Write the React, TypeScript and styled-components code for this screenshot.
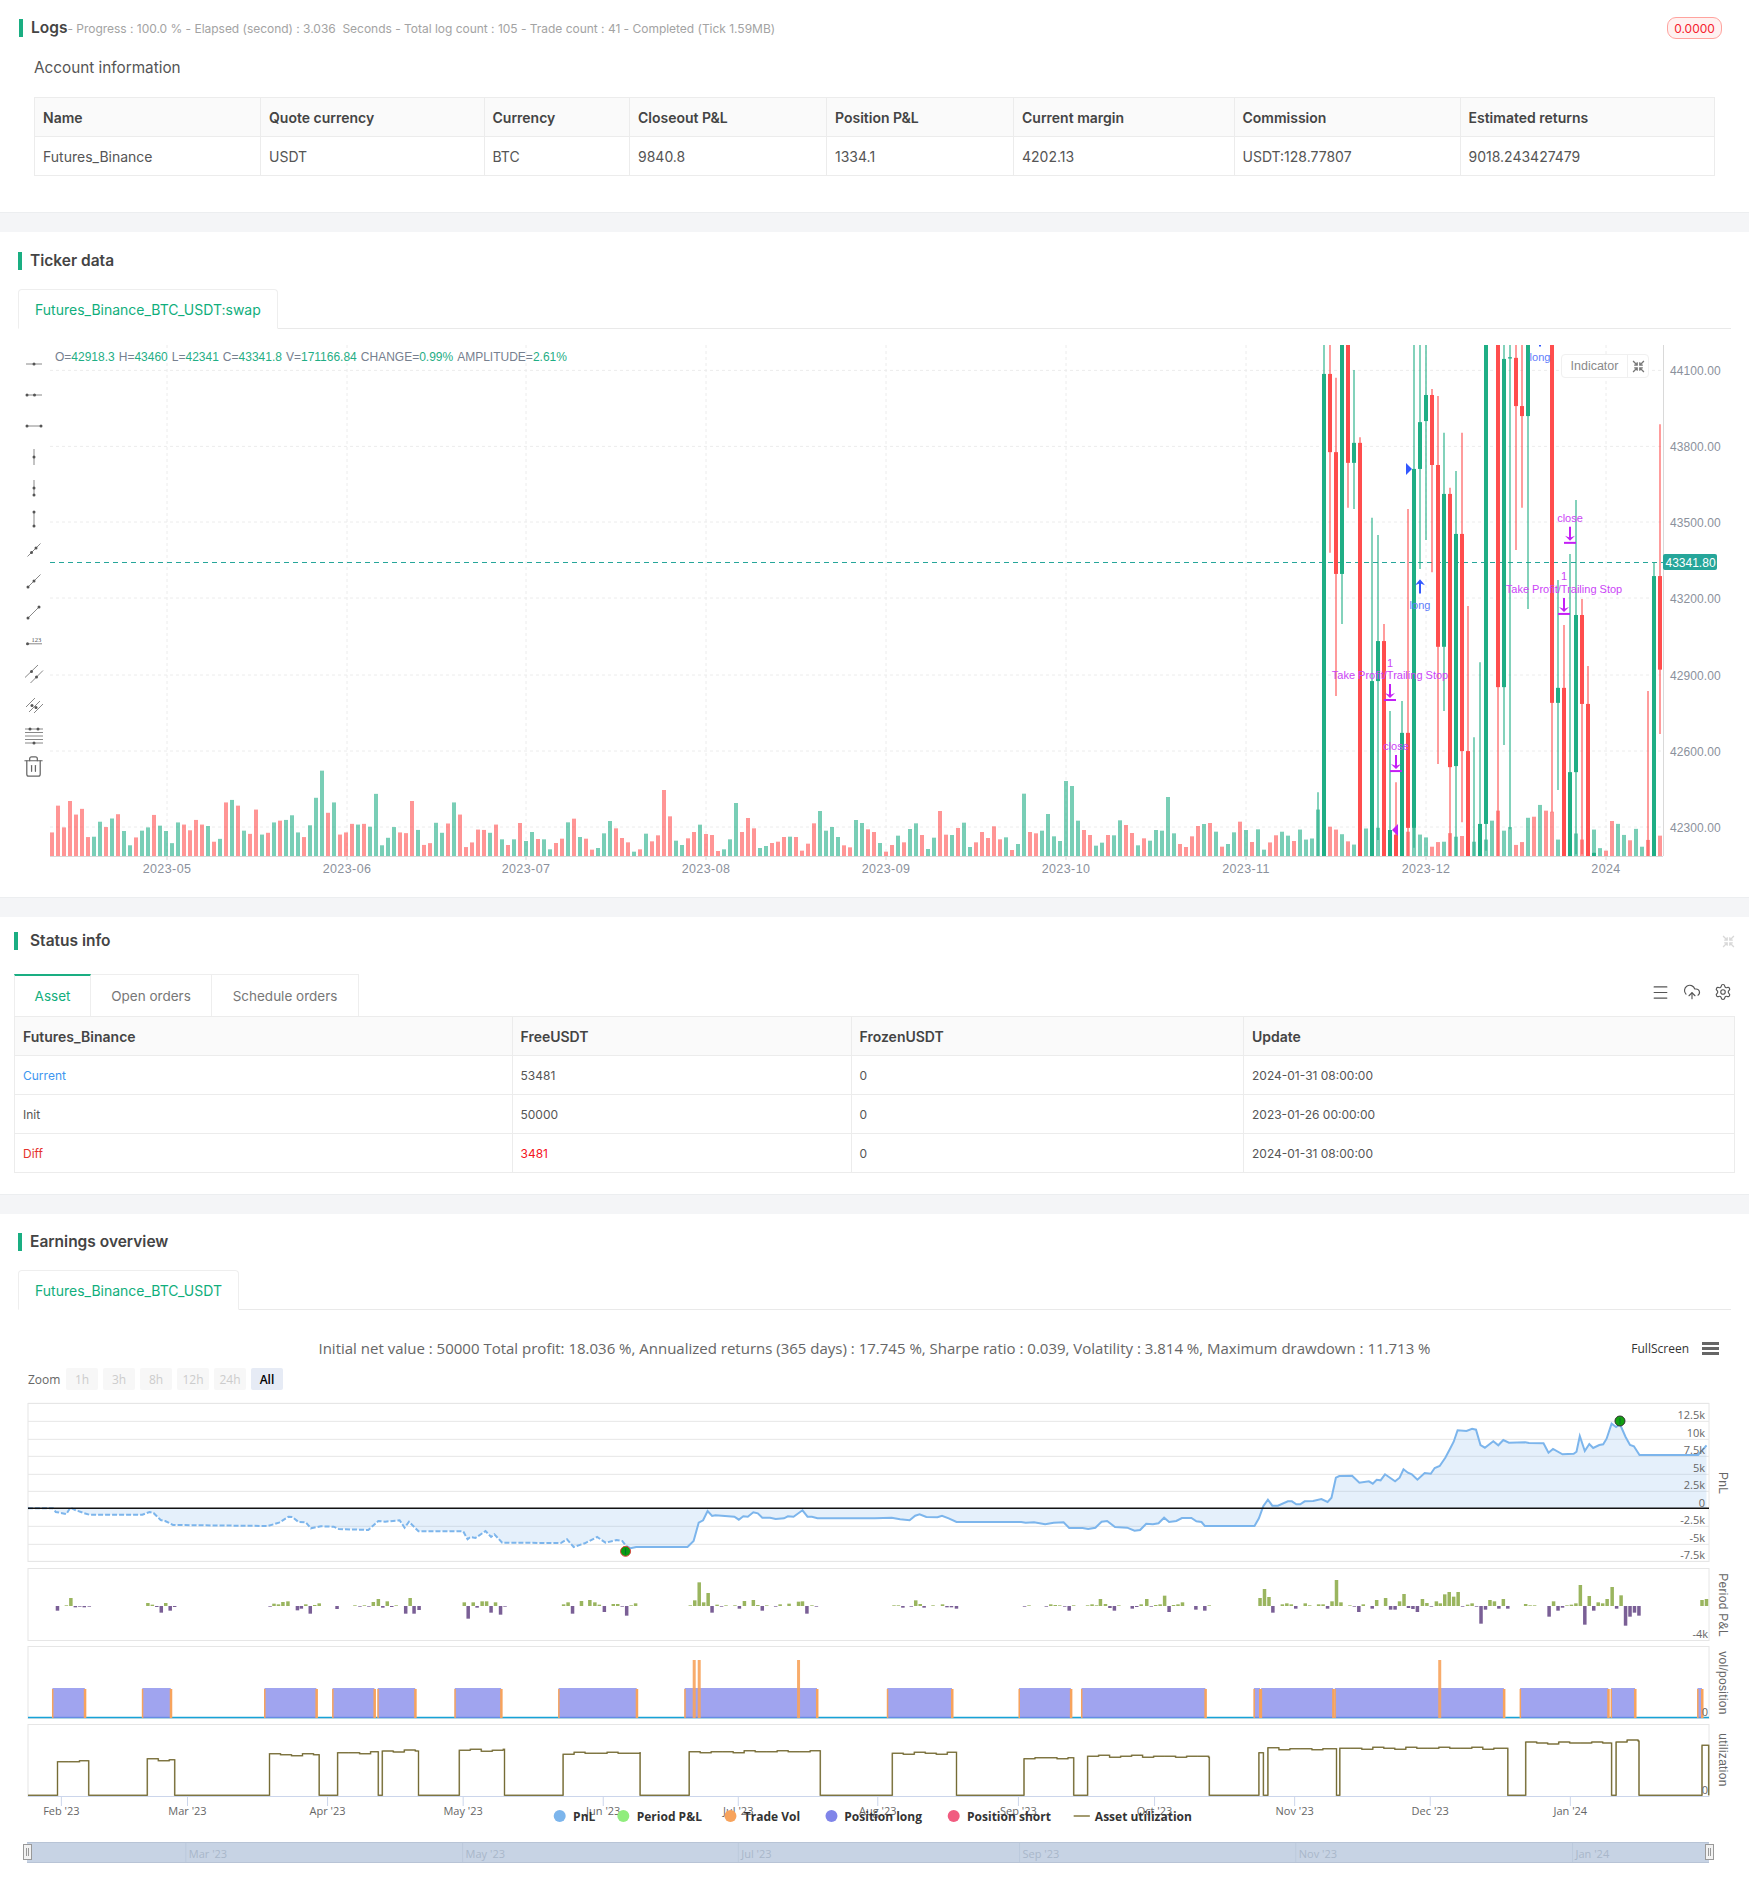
import React from "react";
import styled, { createGlobalStyle } from "styled-components";
import { CloudUpload, Menu, Settings, Trash2 } from "lucide-react";

const GlobalStyle = createGlobalStyle`
  body {
    margin: 0;
    background: #fff;
    font-family: Inter, "Liberation Sans", sans-serif;
    color: #555;
  }
`;

const GREEN = "#1fae85";
const RED = "#ff4d4d";
const MARK = "#c31ff5";
const MARK_TEXT = "#cb45f7";
const BLUE = "#3358ff";

const Band = styled.div`
  height: 20px;
  background: #f4f5f7;
  border-top: 1px solid #eceef0;
  box-sizing: border-box;
`;

const Section = styled.section<{ $top?: number; $bottom?: number }>`
  padding: ${(p) => p.$top ?? 20}px 0 ${(p) => p.$bottom ?? 0}px;
`;

const Heading = styled.h2<{ $left?: number; $gap?: number }>`
  display: flex;
  align-items: center;
  height: 18px;
  margin: 0 0 0 ${(p) => p.$left ?? 18}px;
  font-size: 15.5px;
  line-height: 18px;
  font-weight: 600;
  color: #444;

  &::before {
    content: "";
    width: 4px;
    height: 18px;
    margin-right: ${(p) => p.$gap ?? 8}px;
    background: #1aae82;
  }
`;

const LogsRow = styled.div`
  display: flex;
  align-items: center;
  justify-content: space-between;
  padding-right: 27px;
`;

const LogsLeft = styled.div`
  display: flex;
  align-items: center;
`;

const Progress = styled.span`
  font-size: 12px;
  color: #a3a3a3;
  white-space: pre;
  letter-spacing: -0.02px;
`;

const Badge = styled.span`
  height: 22px;
  width: 55px;
  box-sizing: border-box;
  display: flex;
  align-items: center;
  justify-content: center;
  font-size: 12px;
  color: #f5222d;
  background: #fff1f0;
  border: 1px solid #ffa39e;
  border-radius: 9px;
`;

const SubTitle = styled.div`
  margin: 19px 0 19px 34px;
  height: 20px;
  line-height: 20px;
  font-size: 15.3px;
  color: #555;
`;

const Table = styled.table<{ $left: number; $width: number; $small?: boolean }>`
  margin-left: ${(p) => p.$left}px;
  width: ${(p) => p.$width}px;
  table-layout: fixed;
  border-collapse: collapse;
  font-size: 14px;

  th,
  td {
    height: 39px;
    padding: 0 8px;
    box-sizing: border-box;
    border: 1px solid #ececec;
    text-align: left;
    white-space: nowrap;
  }

  th {
    background: #fafafa;
    font-weight: 600;
    color: #444;
  }

  td {
    color: #555;
    font-size: ${(p) => (p.$small ? 12 : 14)}px;
  }
`;

const Cell = styled.td<{ $color?: string }>`
  && {
    color: ${(p) => p.$color ?? "#555"};
  }
`;

const TabBar = styled.div`
  display: flex;
  margin: 19px 18px 0 18px;
  height: 39px;
  border-bottom: 1px solid #e9e9e9;
`;

const SoloTab = styled.div`
  height: 40px;
  padding: 0 16px;
  box-sizing: border-box;
  display: flex;
  align-items: center;
  font-size: 14px;
  color: #10ae7c;
  background: #fff;
  border: 1px solid #eee;
  border-bottom: 1px solid #fff;
  border-radius: 4px 4px 0 0;
`;

const ChartWrap = styled.div`
  position: relative;
  display: flex;
  margin-top: 16px;
`;

const Toolbar = styled.div`
  width: 50px;
  flex: none;
  box-sizing: border-box;
  padding: 3px 0 0 22px;
  display: flex;
  flex-direction: column;
`;

const ToolSlot = styled.div`
  height: 31px;
  display: flex;
  align-items: center;
  color: #666;
`;

const KlineSvg = styled.svg`
  display: block;
  flex: none;
`;

const Ohlc = styled.div`
  position: absolute;
  left: 55px;
  top: 5px;
  display: flex;
  gap: 4px;
  font: 12px/14px "Liberation Sans", sans-serif;
  color: #76808f;
  white-space: pre;
`;

const OhlcValue = styled.span`
  color: ${GREEN};
`;

const IndicatorBox = styled.div`
  position: absolute;
  left: 1561px;
  top: 9px;
  display: flex;
  height: 24px;
  width: 88px;
  box-sizing: border-box;
  border: 1px solid #f0f0f0;
  border-radius: 4px;
  background: #fff;
  font: 12.5px "Liberation Sans", sans-serif;
  color: #8a8a8a;
`;

const IndicatorLabel = styled.div`
  width: 65px;
  display: flex;
  align-items: center;
  justify-content: center;
  border-right: 1px solid #f0f0f0;
`;

const IndicatorIcon = styled.div`
  flex: 1;
  display: flex;
  align-items: center;
  justify-content: center;
`;

const StatusHead = styled.div`
  display: flex;
  justify-content: space-between;
  align-items: center;
  padding-right: 14px;
`;

const StatusBar = styled.div`
  display: flex;
  justify-content: space-between;
  align-items: center;
  margin: 24px 17px 0 14px;
  height: 42px;
`;

const CardTabs = styled.div`
  display: flex;
  height: 42px;
`;

const CardTab = styled.div<{ $active?: boolean; $width: number }>`
  width: ${(p) => p.$width}px;
  box-sizing: border-box;
  display: flex;
  align-items: center;
  justify-content: center;
  font-size: 13.5px;
  color: ${(p) => (p.$active ? "#10ae7c" : "#777")};
  border: 1px solid #eee;
  border-left: ${(p) => (p.$active ? "1px solid #eee" : "none")};
  border-bottom: none;
  border-top: ${(p) => (p.$active ? "2px solid #1aae82" : "1px solid #eee")};
`;

const ToolIcons = styled.div`
  display: flex;
  align-items: center;
  gap: 13px;
  color: #555;
  margin-top: -6px;
`;

const ChartHead = styled.div`
  display: grid;
  grid-template-columns: 1fr auto 1fr;
  align-items: center;
  margin-top: 28px;
  height: 20px;
`;

const Summary = styled.div`
  font: 15px/20px "Open Sans", sans-serif;
  color: #666;
  white-space: nowrap;
  grid-column: 2;
`;

const FullScreen = styled.div`
  justify-self: end;
  display: flex;
  align-items: center;
  gap: 13px;
  padding-right: 30px;
  font: 12px "Open Sans", sans-serif;
  color: #333;
`;

const Burger = styled.div`
  width: 17px;
  height: 13px;
  border-top: 3px solid #666;
  border-bottom: 3px solid #666;
  box-sizing: border-box;
  position: relative;

  &::after {
    content: "";
    position: absolute;
    left: 0;
    right: 0;
    top: 2px;
    height: 3px;
    background: #666;
  }
`;

const ZoomRow = styled.div`
  display: flex;
  align-items: center;
  gap: 5px;
  margin: 10px 0 0 28px;
  height: 22px;
  font: 12px "Open Sans", sans-serif;
  color: #666;
`;

const ZoomLabel = styled.span`
  width: 33px;
`;

const ZoomBtn = styled.div<{ $active?: boolean }>`
  width: 32px;
  height: 22px;
  display: flex;
  align-items: center;
  justify-content: center;
  border-radius: 2px;
  background: ${(p) => (p.$active ? "#e6ebf5" : "#f7f7f7")};
  color: ${(p) => (p.$active ? "#000" : "#ccc")};
  font-weight: ${(p) => (p.$active ? 600 : 400)};
`;

const StatSvg = styled.svg`
  display: block;
  margin-top: 6px;
`;

const PriceText = styled.text`
  font: 12px "Liberation Sans", sans-serif;
  fill: #8b919c;
  letter-spacing: 0.1px;
`;

const MonthText = styled.text`
  font: 12.5px "Liberation Sans", sans-serif;
  fill: #8b919c;
  letter-spacing: 0.4px;
  text-anchor: middle;
`;

const MarkText = styled.text<{ $color: string }>`
  font: 11px "Liberation Sans", sans-serif;
  fill: ${(p) => p.$color};
  text-anchor: middle;
`;

const TagText = styled.text`
  font: 12px "Liberation Sans", sans-serif;
  fill: #fff;
`;

const AxisLabel = styled.text<{ $anchor?: string }>`
  font: 11px "Open Sans", sans-serif;
  fill: #666;
  text-anchor: ${(p) => p.$anchor ?? "end"};
`;

const AxisTitle = styled.text`
  font: 12px "Liberation Sans", sans-serif;
  fill: #666;
  letter-spacing: 0.3px;
  text-anchor: middle;
`;

const LegendText = styled.text`
  font: 700 12px "Open Sans", sans-serif;
  fill: #333;
`;

const NavText = styled.text`
  font: 11px "Open Sans", sans-serif;
  fill: #a9b7ca;
`;

// ---- kline data, read off the chart. sign: + green, - red

const volA = [-1380,-1305,-1366,-1292,-1330,-1314,-1393,1392,1350,-1365,1341,-1329,1376,1416,-1394,1375,1366,-1331,1361,1376,1410,1352,-1358,-1374,-1345,-1358,1362,-1406,1398,-1296,1289,-1305,1375,-1384,-1316,1386,-1381,1352,-1347,1345,1332,1380,-1393,1360,1283,1207,-1325,1296,-1386,-1380,-1356,1358,-1356,1364,1272,1416,1395,1365,-1380,-1382,-1292,1373,-1415,-1410,1353,1381,-1355,1296,-1330,-1421,-1408,-1372,-1373,1381,-1358];
const volB = [238,-255,238,-189,243,216,-237,238,268,-249,-236,187,-176,231,-236,-269,264,220,183,-205,-234,-247,275,-268,221,-244,-226,-90,-169,242,255,-235,-216,194,-222,-225,-273,268,238,129,-216,-174,-205,264,258,-249,-245,-231,230,-231,-272,-251,-190,153,212,201,231,-256,-262,180,189,-208,-216,249,-275,-255,227,-247,207,190];
const volC = [-225,267,233,-153,-224,225,-204,188,261,-247,-216,-234,-199,-238,232,-270,252,101,-216,-220,212,162,229,243,63,78,182,-210,-225,257,248,-225,226,181,-195,-219,256,-235,242,210,212,111,220,-252,-261,-229,-198,192,-189,215,-260,252,217,-185,210,-246,208,269];
const volD = [-1408,-1388,1378,1389,-1404,1372,1400,1397,1316,1400,-1364,-1372,1385,-1405,1414,-1400,1369,1400,1367,-1400,1400,-1400,1400,-1378,1366,1386,1394,-1420,-1407,1406,-1382,1392,-1390,-1400,1406,1400,1400,1347,-1319,1375,1365,-1415,-1407,1339,-1336,1303,-1319,-1322,1400,-1400,1400,1383,-1400,-1400,1372,1424,-1431,-1348,1356,1387,-1402,1370,1420,-1401,1400,-1389];

const tall = (t: number) => (1446 - Math.abs(t)) / 2.8;
const short = (t: number) => (288 - Math.abs(t)) / 3;
const volumes = [
  ...volA.map((t) => ({ up: t > 0, h: tall(t) })),
  ...volB.map((t) => ({ up: t > 0, h: short(t) })),
  ...volC.map((t) => ({ up: t > 0, h: short(t) })),
  ...volD.map((t) => ({ up: t > 0, h: tall(t) })),
];

// zx = x in the right crop, then wick top, body top, body bottom, wick bottom
type Candle = [number, 1 | 0, number, number, number, number];
const candles: Candle[] = [
  [144,1,1266,1446,1446,1446],[162,1,14,95,1446,1446],[180,0,14,95,314,596],[198,0,106,314,655,997],
  [216,1,14,14,655,795],[234,0,14,14,344,470],[252,1,84,288,344,473],[270,0,272,288,1446,1446],
  [306,1,498,955,1446,1446],[324,1,546,843,955,1400],[342,0,795,843,1446,1446],[360,1,1039,1372,1446,1446],
  [378,0,1238,1385,1446,1446],[396,1,1011,1100,1446,1446],[414,0,473,1100,1366,1446],[432,1,14,361,1366,1422],
  [450,1,14,230,361,641],[468,1,14,154,227,560],[486,0,137,154,350,650],[504,0,157,350,859,1187],
  [522,1,260,431,859,1039],[540,0,414,431,1196,1446],[558,1,367,543,1193,1446],[576,0,260,543,1151,1350],
  [594,0,745,1151,1446,1446],[612,1,1112,1446,1446,1446],[630,1,902,1355,1446,1446],[648,1,14,14,1355,1430],
  [684,0,14,14,972,1446],[702,1,14,53,972,1134],[720,1,14,1370,1370,1370],[738,0,14,50,185,588],
  [756,0,14,185,213,470],[774,1,14,14,213,753],[846,0,14,14,1016,1322],[864,1,672,974,1016,1260],
  [882,0,798,974,1446,1446],[900,1,599,1210,1446,1446],[918,1,448,770,1210,1440],[936,0,725,770,1019,1440],
  [954,0,913,1019,1446,1446],[972,1,1436,1436,1446,1446],[1134,0,983,1446,1446,1446],[1152,1,622,661,1446,1446],
  [1170,0,236,661,923,1103],
];

const cx = (z: number) => 1270 + z / 3;
const cy = (z: number) => 340 + z / 2.8;

const gridYs = [370.4, 446.4, 522, 598, 675, 751, 827];
const priceLabels = ["44100.00", "43800.00", "43500.00", "43200.00", "42900.00", "42600.00", "42300.00"];
const months = [
  ["2023-05", 167], ["2023-06", 347], ["2023-07", 526], ["2023-08", 706], ["2023-09", 886],
  ["2023-10", 1066], ["2023-11", 1246], ["2023-12", 1426], ["2024", 1606],
] as const;

const DownMark = ({ z, y }: { z: number; y: number }) => {
  const x = cx(z);
  const b = cy(y);
  return (
    <g>
      <path d={`M${x} ${b - 16}V${b - 4}`} stroke={MARK} strokeWidth={2} />
      <path d={`M${x - 5} ${b - 7}L${x} ${b - 2}L${x + 5} ${b - 7}L${x} ${b - 5}Z`} fill={MARK} />
      <path d={`M${x - 6} ${b}H${x + 6}`} stroke={MARK} strokeWidth={2} />
    </g>
  );
};

const Kline = () => (
  <KlineSvg width={1699} height={536} viewBox="50 345 1699 536">
    {gridYs.map((y) => (
      <path key={y} d={`M50 ${y}H1663`} stroke="#ececec" strokeDasharray="3 3" />
    ))}
    {months.map(([, x]) => (
      <path key={x} d={`M${x} 345V856`} stroke="#ececec" strokeDasharray="3 3" />
    ))}
    <path d="M49.5 345V881" stroke="#eee" />
    <path d="M50 562.5H1663" stroke="#26a69a" strokeDasharray="5 4" />

    {candles.map(([z, up, wt, bt, bb, wb]) => {
      const x = cx(z);
      const c = up ? GREEN : RED;
      return (
        <g key={z}>
          <path d={`M${x} ${cy(wt)}V${cy(wb)}`} stroke={c} strokeWidth={2} opacity={0.55} />
          {bb > bt && <rect x={x - 2} y={cy(bt)} width={4} height={cy(bb) - cy(bt)} fill={c} />}
        </g>
      );
    })}
    {volumes.map((v, i) => (
      <rect key={i} x={50 + 6 * i} y={856 - v.h} width={4} height={v.h} fill={v.up ? GREEN : "#ff4e4e"} opacity={0.6} />
    ))}
    <path d={`M${cx(714)} ${cy(50)}h4`} stroke={GREEN} strokeWidth={1.2} />

    <DownMark z={360} y={1008} />
    <DownMark z={378} y={1207} />
    <DownMark z={900} y={568} />
    <DownMark z={882} y={767} />
    <MarkText $color={MARK_TEXT} x={cx(360)} y={cy(903) + 4}>1</MarkText>
    <MarkText $color={MARK_TEXT} x={cx(360)} y={cy(937) + 4}>Take Profit/Trailing Stop</MarkText>
    <MarkText $color={MARK_TEXT} x={cx(378)} y={cy(1136) + 4}>close</MarkText>
    <MarkText $color={MARK_TEXT} x={cx(900)} y={cy(498) + 4}>close</MarkText>
    <MarkText $color={MARK_TEXT} x={cx(882)} y={cy(662) + 4}>1</MarkText>
    <MarkText $color={MARK_TEXT} x={cx(882)} y={cy(696) + 4}>Take Profit/Trailing Stop</MarkText>
    <MarkText $color="#5f7dfa" x={cx(450)} y={cy(741) + 4}>long</MarkText>
    <MarkText $color="#5f7dfa" x={cx(810)} y={cy(47) + 4}>long</MarkText>
    <path d={`M${cx(450)} ${cy(710)}V${cy(675)}`} stroke={BLUE} strokeWidth={2} />
    <path d={`M${cx(450) - 5} ${cy(670) + 6}L${cx(450)} ${cy(670)}L${cx(450) + 5} ${cy(670) + 6}L${cx(450)} ${cy(670) + 4}Z`} fill={BLUE} />
    <path d={`M${cx(810)} 345v1.5`} stroke={BLUE} strokeWidth={2} />
    <path d="M1406 463L1412 469L1406 475Z" fill={BLUE} />
    <path d="M1398 824L1392 830L1398 836Z" fill={MARK} />

    <path d="M50 856.5H1663" stroke="#d9d9d9" />
    <path d="M1663.5 345V856" stroke="#d9d9d9" />
    {months.map(([, x]) => (
      <path key={x} d={`M${x} 856V860`} stroke="#d9d9d9" />
    ))}
    {gridYs.map((y, i) => (
      <PriceText key={y} x={1670} y={y + 4.5}>{priceLabels[i]}</PriceText>
    ))}
    {months.map(([label, x]) => (
      <MonthText key={label} x={x} y={873}>{label}</MonthText>
    ))}
    <rect x={1663} y={554} width={54} height={16} rx={2} fill="#26a69a" />
    <TagText x={1665.5} y={566.5}>43341.80</TagText>
  </KlineSvg>
);

// ---- toolbar icons

type ToolDef = { lines: number[][]; dots: number[][]; label?: string };
const tools: ToolDef[] = [
  { lines: [[4, 12, 20, 12]], dots: [[12, 12]] },
  { lines: [[4, 12, 20, 12]], dots: [[5, 12], [12.5, 12]] },
  { lines: [[4, 12, 20, 12]], dots: [[5, 12], [19, 12]] },
  { lines: [[12, 4, 12, 20]], dots: [[12, 12]] },
  { lines: [[12, 4, 12, 19]], dots: [[12, 12], [12, 19]] },
  { lines: [[12, 5, 12, 19]], dots: [[12, 5], [12, 19]] },
  { lines: [[5.5, 18.5, 18.5, 5.5]], dots: [[9.5, 14.5], [14, 10]] },
  { lines: [[6, 18, 18.5, 5.5]], dots: [[6, 18], [12, 12]] },
  { lines: [[6, 18, 17, 7]], dots: [[6, 18], [17, 7]] },
  { lines: [[5, 12.8, 20, 12.8]], dots: [[5.5, 12.8]], label: "123" },
  { lines: [[3, 15.5, 16, 3], [8.5, 21, 21, 8.5]], dots: [[9.5, 9.5], [14.5, 15]] },
  { lines: [[4, 14, 13, 5], [7, 19, 18, 8], [12, 20, 21, 11]], dots: [[10, 12.5], [14, 14.5]] },
  { lines: [[3, 5, 21, 5], [3, 8.5, 21, 8.5], [3, 12, 21, 12], [3, 15.5, 21, 15.5], [3, 19, 21, 19]], dots: [[8, 5], [16, 5], [12, 19]] },
];

const ToolGlyph = ({ def }: { def: ToolDef }) => (
  <svg width={24} height={24} viewBox="0 0 24 24">
    {def.lines.map((l, i) => (
      <line key={i} x1={l[0]} y1={l[1]} x2={l[2]} y2={l[3]} stroke="#888" strokeWidth={1} />
    ))}
    {def.dots.map((d, i) => (
      <circle key={i} cx={d[0]} cy={d[1]} r={1.5} fill="#555" />
    ))}
    {def.label && (
      <text x={9.5} y={11} fontSize={6.5} fontFamily="Liberation Serif, serif" fill="#555">
        {def.label}
      </text>
    )}
  </svg>
);

const Shrink = ({ color, size }: { color: string; size: number }) => (
  <svg width={size} height={size} viewBox="0 0 12 12" fill="none" stroke={color} strokeWidth={1.2}>
    <path d="M1 1L4.6 4.6M4.8 2V4.8H2M11 1L7.4 4.6M7.2 2V4.8H10M1 11L4.6 7.4M4.8 10V7.2H2M11 11L7.4 7.4M7.2 10V7.2H10" />
  </svg>
);

// ---- earnings chart data, crop coordinates

const lx = (z: number) => z / 1.792;
const rx = (z: number) => 875 + z / 1.792;
const py = (z: number) => 1320 + z / 3;
const ly = (z: number) => 1560 + z / 3;

const pnlLeft = [[50,562],[95,562],[100,573],[119,579],[126,560],[135,567],[150,576],[160,581],[255,581],[268,573],[275,576],[288,597],[296,600],[310,612],[480,615],[500,605],[517,587],[524,588],[535,603],[548,604],[557,622],[575,616],[598,617],[607,624],[660,627],[678,600],[690,602],[716,598],[725,620],[733,602],[750,631],[830,631],[838,655],[843,648],[852,651],[870,630],[880,648],[886,640],[900,665],[1005,666],[1016,655],[1028,678],[1048,667],[1070,648],[1085,665],[1105,657],[1115,660],[1122,675]];
const pnlMid = [[1122,675],[1130,682],[1140,678],[1232,678],[1243,660],[1252,605],[1260,598],[1268,570],[1276,585],[1282,583],[1316,587],[1324,596],[1332,586],[1340,587],[1350,574],[1358,577],[1366,590],[1380,590],[1390,594],[1405,592],[1412,586],[1422,587],[1438,568],[1447,587],[1455,587],[1465,592],[1568,592]];
const pnlRight = [[0,592],[30,590],[45,595],[62,598],[72,584],[80,580],[92,588],[112,589],[120,584],[132,592],[146,603],[262,603],[270,605],[285,604],[305,610],[320,605],[338,604],[348,621],[372,621],[382,624],[395,620],[406,602],[416,600],[430,618],[452,620],[465,629],[475,627],[486,608],[498,610],[508,607],[518,590],[527,603],[540,600],[550,591],[567,591],[576,601],[585,603],[591,615],[680,615],[688,592],[696,555],[704,536],[712,554],[722,554],[740,541],[747,541],[755,550],[762,550],[770,541],[785,540],[800,534],[811,543],[818,530],[826,470],[832,465],[855,464],[868,485],[885,481],[892,488],[899,476],[906,478],[914,460],[932,481],[940,470],[947,445],[955,455],[962,460],[972,476],[985,456],[996,458],[1003,441],[1012,435],[1022,410],[1030,385],[1037,362],[1044,328],[1060,330],[1070,323],[1077,326],[1085,372],[1093,380],[1108,361],[1117,373],[1126,357],[1136,365],[1165,364],[1172,366],[1198,367],[1207,395],[1215,384],[1232,400],[1252,398],[1257,392],[1263,345],[1272,390],[1280,369],[1287,381],[1298,372],[1305,370],[1311,353],[1320,308],[1328,318],[1335,310],[1345,348],[1353,372],[1360,376],[1370,402],[1475,402],[1490,373]];

const toPath = (pts: number[][], fx: (z: number) => number) =>
  pts.map(([x, y], i) => `${i ? "L" : "M"}${fx(x).toFixed(1)} ${py(y).toFixed(1)}`).join("");

const areaPath = `M${lx(50)} ${py(562)}` +
  [...pnlLeft, ...pnlMid].map(([x, y]) => `L${lx(x).toFixed(1)} ${py(y).toFixed(1)}`).join("") +
  pnlRight.map(([x, y]) => `L${rx(x).toFixed(1)} ${py(y).toFixed(1)}`).join("") +
  `L${rx(1490)} ${py(562)}Z`;

const barsLeft = [[103,-14],[119,2],[127,24],[135,-4],[143,-2],[151,-4],[160,-2],[265,9],[273,4],[281,-3],[289,-20],[297,9],[305,-14],[313,-3],[484,-2],[491,7],[499,5],[507,12],[516,14],[533,-13],[540,-8],[548,5],[556,-23],[564,3],[572,8],[604,-9],[636,2],[645,-2],[653,2],[661,-2],[669,12],[678,21],[686,-5],[694,14],[702,-3],[710,2],[727,-23],[735,24],[742,-23],[751,-12],[832,11],[839,-38],[848,11],[855,-5],[864,14],[872,14],[880,-20],[888,11],[897,-26],[905,-2],[1010,5],[1018,11],[1026,-23],[1042,15],[1057,18],[1066,11],[1074,4],[1083,-18],[1099,6],[1107,6],[1115,-2],[1123,-29],[1131,2],[1139,8],[1237,2],[1245,17],[1253,71],[1261,11],[1269,39],[1276,-20],[1285,4],[1293,-2],[1301,2],[1317,2],[1325,-8],[1334,15],[1350,18],[1358,3],[1366,-14],[1374,2],[1390,-2],[1398,5],[1414,7],[1431,13],[1438,14],[1446,-23],[1455,2],[1463,-2]];
const barsRight = [[34,2],[42,2],[50,-5],[65,-2],[73,17],[81,6],[88,-5],[104,2],[121,5],[129,-4],[137,-4],[146,-8],[268,-2],[276,2],[307,-2],[315,5],[323,3],[331,2],[340,-2],[348,-14],[356,2],[381,2],[389,5],[397,2],[404,21],[413,6],[421,-6],[429,-14],[437,2],[461,-8],[469,-3],[477,5],[487,21],[495,-2],[503,3],[511,5],[519,31],[527,-18],[535,3],[543,5],[551,11],[575,-11],[591,-14],[599,2],[690,24],[698,51],[706,27],[713,-20],[730,5],[738,8],[746,5],[754,-8],[771,8],[779,2],[795,5],[803,5],[811,-8],[819,14],[827,78],[835,11],[851,2],[859,-2],[867,-18],[875,5],[891,-8],[899,18],[915,24],[924,-11],[932,-11],[940,14],[948,36],[956,-6],[964,-9],[972,-18],[981,21],[989,9],[997,-2],[1006,14],[1013,8],[1021,35],[1029,42],[1037,28],[1045,42],[1053,-2],[1062,4],[1070,8],[1078,-2],[1086,-53],[1094,-11],[1102,18],[1110,14],[1118,-8],[1126,21],[1134,-8],[1166,6],[1174,2],[1182,2],[1208,-32],[1216,14],[1224,-14],[1232,-5],[1240,2],[1248,4],[1256,8],[1264,63],[1272,-56],[1280,30],[1288,-14],[1296,11],[1304,8],[1312,21],[1321,57],[1329,-8],[1337,32],[1345,-59],[1353,-32],[1361,-20],[1369,-29],[1482,18],[1490,21]];

const allBars = [
  ...barsLeft.map(([z, h]) => [lx(z), h]),
  ...barsRight.map(([z, h]) => [rx(z), h]),
];

const blocks = [
  ...[[94,152],[255,306],[474,567],[596,671],[677,744],[815,898],[1001,1141],[1227,1464]].map(([a, b]) => [lx(a), lx(b)]),
  ...[[22,138],[258,351],[370,592],[679,690],[692,821],[824,1127],[1156,1314],[1319,1362],[1474,1482]].map(([a, b]) => [rx(a), rx(b)]),
];

const spikes = [lx(1244), lx(1253), lx(1431), rx(1012)];

const steps = [
  ...[[103,159,602],[264,313,596],[483,572,581],[605,678,575],[685,750,570],[823,904,568],[1009,1147,577],[1235,1470,572]].map(([a, b, t]) => [lx(a), lx(b), t]),
  ...[[31,146,577],[267,356,590],[381,599,586],[688,696,572],[704,827,563],[833,1134,562],[1166,1320,546],[1328,1369,540],[1482,1494,550]].map(([a, b, t]) => [rx(a), rx(b), t]),
];

const stepPath = (() => {
  let d = `M28 ${ly(703)}`;
  steps.forEach(([a, b, t]) => {
    d += `H${a.toFixed(1)}`;
    for (let x = a; x < b; x += 11) {
      const y = ly(t) + Math.round(Math.sin(x * 0.37) * 0.7);
      d += `V${y.toFixed(1)}H${Math.min(x + 11, b).toFixed(1)}`;
    }
    d += `V${ly(703)}`;
  });
  return d;
})();

const pnlTicks = [
  ["12.5k", 283], ["10k", 337], ["7.5k", 388], ["5k", 441], ["2.5k", 492],
  ["0", 546], ["-2.5k", 598], ["-5k", 652], ["-7.5k", 703],
] as const;
const pnlGrid = [247, 301, 355, 406, 460, 511, 616, 670, 721];

const dateTicks = [
  ["Feb '23", lx(110)], ["Mar '23", lx(336)], ["Apr '23", lx(587)], ["May '23", lx(830)],
  ["Jun '23", lx(1081)], ["Jul '23", lx(1323)], ["Aug '23", rx(5)], ["Sep '23", rx(257)],
  ["Oct '23", rx(501)], ["Nov '23", rx(752)], ["Dec '23", rx(995)], ["Jan '24", rx(1246)],
] as const;

const navTicks = [
  ["Mar '23", lx(333)], ["May '23", lx(829)], ["Jul '23", lx(1323)],
  ["Sep '23", rx(259)], ["Nov '23", rx(754)], ["Jan '24", rx(1250)],
] as const;

const legend = [
  { label: "PnL", x: lx(1003), c: "#7cb5ec", tx: lx(1027) },
  { label: "Period P&L", x: lx(1117), c: "#90ed7d", tx: lx(1141) },
  { label: "Trade Vol", x: lx(1309), c: "#f7a35c", tx: lx(1333) },
  { label: "Position long", x: lx(1490), c: "#8085e9", tx: lx(1513) },
  { label: "Position short", x: rx(141), c: "#f15c80", tx: rx(165) },
];

const Earnings = () => (
  <StatSvg width={1749} height={480} viewBox="0 1395 1749 480">
    {/* PnL pane */}
    <rect x={28} y={1402.5} width={1681} height={158} fill="none" stroke="#e6e6e6" />
    {pnlGrid.map((z) => (
      <path key={z} d={`M28 ${py(z)}H1709`} stroke="#e6e6e6" />
    ))}
    <path d={areaPath} fill="#7cb5ec" opacity={0.2} />
    <path d={toPath(pnlLeft, lx)} fill="none" stroke="#7cb5ec" strokeWidth={2} strokeDasharray="5 2" />
    <path d={toPath(pnlMid, lx)} fill="none" stroke="#7cb5ec" strokeWidth={2} />
    <path d={toPath(pnlRight, rx)} fill="none" stroke="#7cb5ec" strokeWidth={2} />
    <path d={`M28 ${py(562)}H1709`} stroke="#111" strokeWidth={1.5} />
    <circle cx={lx(1121)} cy={py(691)} r={5} fill="#0c9c12" stroke="#e0403a" />
    <path d={`M${lx(1121)} ${py(691) - 3}v6`} stroke="#063" strokeWidth={0.8} />
    <circle cx={rx(1335)} cy={py(300)} r={5} fill="#12a012" stroke="#333" />
    <path d={`M${rx(1335)} ${py(300) - 3}v6`} stroke="#063" strokeWidth={0.8} />
    {pnlTicks.map(([t, z]) => (
      <AxisLabel key={t} x={1705} y={py(z) + 4}>{t}</AxisLabel>
    ))}
    <AxisTitle transform="translate(1719 1482) rotate(90)">PnL</AxisTitle>

    {/* period P&L pane */}
    <rect x={28} y={1567.5} width={1681} height={72} fill="none" stroke="#e6e6e6" />
    {allBars.map(([x, h]) => (
      <rect
        key={x}
        x={x - 1.75}
        y={h > 0 ? 1605 - h / 3 : 1605}
        width={3.5}
        height={Math.abs(h) / 3}
        fill={h > 0 ? "#9ab55f" : "#7a5f96"}
      />
    ))}
    <AxisLabel x={1708} y={1637}>-4k</AxisLabel>
    <AxisTitle transform="translate(1719 1604) rotate(90)">Period P&amp;L</AxisTitle>

    {/* vol / position pane */}
    <rect x={28} y={1645.5} width={1681} height={72} fill="none" stroke="#e6e6e6" />
    <path d="M28 1716.5H1709" stroke="#17a2d8" strokeWidth={1.5} />
    {blocks.map(([a, b]) => (
      <g key={a}>
        <rect x={a} y={1687} width={b - a} height={30} fill="#8085e9" opacity={0.75} />
        <rect x={a - 0.5} y={1688} width={1.5} height={29} fill="#f7a35c" />
        <rect x={b - 1} y={1688} width={2.5} height={29} fill="#f7a35c" />
      </g>
    ))}
    {spikes.map((x) => (
      <rect key={x} x={x - 1.5} y={1659} width={3} height={58} fill="#f7a35c" opacity={0.9} />
    ))}
    <AxisLabel x={1708} y={1715}>0</AxisLabel>
    <AxisTitle transform="translate(1719 1682) rotate(90)">vol/position</AxisTitle>

    {/* utilization pane */}
    <rect x={28} y={1723.5} width={1681} height={72} fill="none" stroke="#e6e6e6" />
    <path d={stepPath} fill="none" stroke="#aaa27c" strokeWidth={1.6} />
    <path d={stepPath} fill="none" stroke="#5f5518" strokeWidth={0.7} />
    <path d="M28 1795.5H1709" stroke="#ccd6eb" />
    {dateTicks.map(([label, x]) => (
      <g key={label}>
        <path d={`M${x} 1795V1805`} stroke="#ccd6eb" />
        <AxisLabel $anchor="middle" x={x} y={1814}>{label}</AxisLabel>
      </g>
    ))}
    <AxisLabel x={1708} y={1793}>0</AxisLabel>
    <AxisTitle transform="translate(1719 1759) rotate(90)">utilization</AxisTitle>

    {legend.map((l) => (
      <g key={l.label}>
        <circle cx={l.x} cy={1815} r={6} fill={l.c} />
        <LegendText x={l.tx} y={1819.5}>{l.label}</LegendText>
      </g>
    ))}
    <path d={`M${rx(356)} 1815H${rx(385)}`} stroke="#a39b70" strokeWidth={2} />
    <LegendText x={rx(394)} y={1819.5}>Asset utilization</LegendText>

    {/* navigator */}
    <rect x={27} y={1841} width={1682} height={21} fill="#c7d3e4" />
    {navTicks.map(([label, x]) => (
      <g key={label}>
        <path d={`M${x} 1841V1862`} stroke="#bccadc" />
        <NavText x={x + 3} y={1857}>{label}</NavText>
      </g>
    ))}
    <path d="M27 1841.5H1709M27 1861.5H1709" stroke="#b8c4d6" />
    {[23, 1705].map((x) => (
      <g key={x}>
        <rect x={x + 0.5} y={1843.5} width={8} height={15} fill="#f2f2f2" stroke="#999" />
        <path d={`M${x + 3.5} 1847V1855M${x + 5.5} 1847V1855`} stroke="#999" />
      </g>
    ))}
  </StatSvg>
);

const accountCols = [226, 223.5, 145.5, 197, 187, 220.5, 226, 254];
const statusCols = [497.5, 339, 392.5, 491];

const App: React.FC = () => (
  <>
    <GlobalStyle />
    <Section $top={17} $bottom={36}>
      <LogsRow>
        <LogsLeft>
          <Heading $left={19}>Logs</Heading>
          <Progress>- Progress : 100.0 % - Elapsed (second) : 3.036  Seconds - Total log count : 105 - Trade count : 41 - Completed (Tick 1.59MB)</Progress>
        </LogsLeft>
        <Badge>0.0000</Badge>
      </LogsRow>
      <SubTitle>Account information</SubTitle>
      <Table $left={34} $width={1680}>
        <colgroup>
          {accountCols.map((w, i) => (
            <col key={i} width={w} />
          ))}
        </colgroup>
        <thead>
          <tr>
            <th>Name</th>
            <th>Quote currency</th>
            <th>Currency</th>
            <th>Closeout P&amp;L</th>
            <th>Position P&amp;L</th>
            <th>Current margin</th>
            <th>Commission</th>
            <th>Estimated returns</th>
          </tr>
        </thead>
        <tbody>
          <tr>
            <td>Futures_Binance</td>
            <td>USDT</td>
            <td>BTC</td>
            <td>9840.8</td>
            <td>1334.1</td>
            <td>4202.13</td>
            <td>USDT:128.77807</td>
            <td>9018.243427479</td>
          </tr>
        </tbody>
      </Table>
    </Section>
    <Band />

    <Section $bottom={16}>
      <Heading>Ticker data</Heading>
      <TabBar>
        <SoloTab>Futures_Binance_BTC_USDT:swap</SoloTab>
      </TabBar>
      <ChartWrap>
        <Toolbar>
          {tools.map((t, i) => (
            <ToolSlot key={i}>
              <ToolGlyph def={t} />
            </ToolSlot>
          ))}
          <ToolSlot>
            <Trash2 size={23} strokeWidth={1.3} />
          </ToolSlot>
        </Toolbar>
        <Kline />
        <Ohlc>
          <span>O=<OhlcValue>42918.3</OhlcValue></span>
          <span>H=<OhlcValue>43460</OhlcValue></span>
          <span>L=<OhlcValue>42341</OhlcValue></span>
          <span>C=<OhlcValue>43341.8</OhlcValue></span>
          <span>V=<OhlcValue>171166.84</OhlcValue></span>
          <span>CHANGE=<OhlcValue>0.99%</OhlcValue></span>
          <span>AMPLITUDE=<OhlcValue>2.61%</OhlcValue></span>
        </Ohlc>
        <IndicatorBox>
          <IndicatorLabel>Indicator</IndicatorLabel>
          <IndicatorIcon>
            <Shrink color="#777" size={13} />
          </IndicatorIcon>
        </IndicatorBox>
      </ChartWrap>
    </Section>
    <Band />

    <Section $top={15} $bottom={21}>
      <StatusHead>
        <Heading $left={14} $gap={12}>Status info</Heading>
        <Shrink color="#d8d8d8" size={13} />
      </StatusHead>
      <StatusBar>
        <CardTabs>
          <CardTab $active $width={77}>Asset</CardTab>
          <CardTab $width={121}>Open orders</CardTab>
          <CardTab $width={147}>Schedule orders</CardTab>
        </CardTabs>
        <ToolIcons>
          <Menu size={19} strokeWidth={1.5} />
          <CloudUpload size={18} strokeWidth={1.5} />
          <Settings size={18} strokeWidth={1.5} />
        </ToolIcons>
      </StatusBar>
      <Table $left={14} $width={1720} $small>
        <colgroup>
          {statusCols.map((w, i) => (
            <col key={i} width={w} />
          ))}
        </colgroup>
        <thead>
          <tr>
            <th>Futures_Binance</th>
            <th>FreeUSDT</th>
            <th>FrozenUSDT</th>
            <th>Update</th>
          </tr>
        </thead>
        <tbody>
          <tr>
            <Cell $color="#3d96f0">Current</Cell>
            <td>53481</td>
            <td>0</td>
            <td>2024-01-31 08:00:00</td>
          </tr>
          <tr>
            <td>Init</td>
            <td>50000</td>
            <td>0</td>
            <td>2023-01-26 00:00:00</td>
          </tr>
          <tr>
            <Cell $color="#e5322d">Diff</Cell>
            <Cell $color="#f5141e">3481</Cell>
            <td>0</td>
            <td>2024-01-31 08:00:00</td>
          </tr>
        </tbody>
      </Table>
    </Section>
    <Band />

    <Section $top={19} $bottom={16}>
      <Heading>Earnings overview</Heading>
      <TabBar>
        <SoloTab>Futures_Binance_BTC_USDT</SoloTab>
      </TabBar>
      <ChartHead>
        <Summary>Initial net value : 50000 Total profit: 18.036 %, Annualized returns (365 days) : 17.745 %, Sharpe ratio : 0.039, Volatility : 3.814 %, Maximum drawdown : 11.713 %</Summary>
        <FullScreen>
          FullScreen
          <Burger />
        </FullScreen>
      </ChartHead>
      <ZoomRow>
        <ZoomLabel>Zoom</ZoomLabel>
        <ZoomBtn>1h</ZoomBtn>
        <ZoomBtn>3h</ZoomBtn>
        <ZoomBtn>8h</ZoomBtn>
        <ZoomBtn>12h</ZoomBtn>
        <ZoomBtn>24h</ZoomBtn>
        <ZoomBtn $active>All</ZoomBtn>
      </ZoomRow>
      <Earnings />
    </Section>
  </>
);

export default App;
